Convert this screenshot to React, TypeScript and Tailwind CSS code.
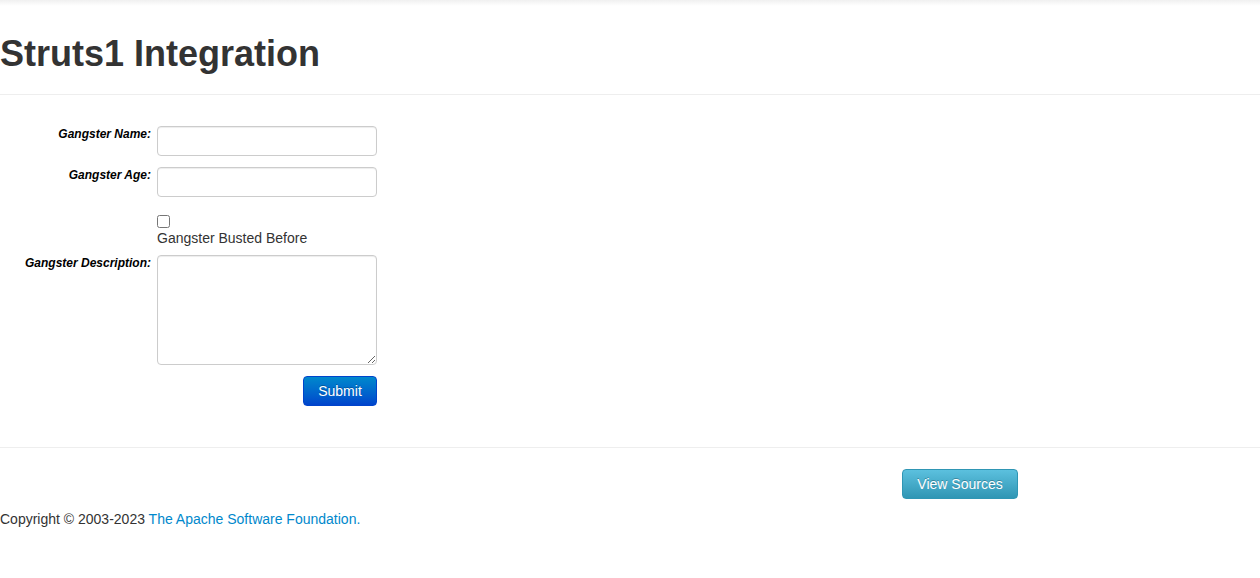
import React from "react";

export default function App() {
  const font = { fontFamily: '"Liberation Sans", Arial, sans-serif' };
  return (
    <div className="min-h-[578px] w-full bg-white text-[14px] leading-[20px] text-[#333]" style={font}>
      <div className="h-[6px] bg-gradient-to-b from-[#f0f0f0] to-white" />
      <div className="mt-[28px] border-b border-[#eee] pb-[20px]">
        <h1 className="m-0 text-[36px] font-bold leading-[40px] text-[#333]">Struts1 Integration</h1>
      </div>

      <form className="pt-[31px]" onSubmit={(e) => e.preventDefault()}>
        <div className="flex items-start">
          <label className="w-[151px] text-right text-[12px] font-bold italic leading-[16px] text-black">Gangster Name:</label>
          <input
            type="text"
            className="ml-[6px] h-[30px] w-[220px] rounded-[4px] border border-[#ccc] bg-white px-[6px] shadow-[inset_0_1px_1px_rgba(0,0,0,0.075)] outline-none"
          />
        </div>
        <div className="mt-[11px] flex items-start">
          <label className="w-[151px] text-right text-[12px] font-bold italic leading-[16px] text-black">Gangster Age:</label>
          <input
            type="text"
            className="ml-[6px] h-[30px] w-[220px] rounded-[4px] border border-[#ccc] bg-white px-[6px] shadow-[inset_0_1px_1px_rgba(0,0,0,0.075)] outline-none"
          />
        </div>
        <div className="mt-[18px] flex items-start">
          <div className="w-[151px]" />
          <div className="ml-[6px] flex flex-col items-start">
            <input type="checkbox" className="m-0 h-[13px] w-[13px]" />
            <span className="text-[14px] leading-[20px] text-[#333]">Gangster Busted Before</span>
          </div>
        </div>
        <div className="mt-[7px] flex items-start">
          <label className="w-[151px] text-right text-[12px] font-bold italic leading-[16px] text-black">Gangster Description:</label>
          <textarea className="ml-[6px] block h-[110px] w-[220px] rounded-[4px] border border-[#ccc] bg-white px-[6px] py-[4px] shadow-[inset_0_1px_1px_rgba(0,0,0,0.075)] outline-none" />
        </div>
        <div className="mt-[11px] flex w-[377px] justify-end">
          <button
            type="submit"
            className="h-[30px] w-[74px] rounded-[4px] border border-[#0044cc] bg-gradient-to-b from-[#0088cc] to-[#0044cc] text-[14px] leading-[20px] text-white [text-shadow:0_-1px_0_rgba(0,0,0,0.25)]"
          >
            Submit
          </button>
        </div>
      </form>

      <div className="mt-[41px] border-t border-[#eee]" />
      <div className="mt-[21px] flex w-[1018px] justify-end">
        <button
          type="button"
          className="h-[30px] w-[116px] rounded-[4px] border border-[#2f96b4] bg-gradient-to-b from-[#5bc0de] to-[#2f96b4] text-[14px] leading-[20px] text-white [text-shadow:0_-1px_0_rgba(0,0,0,0.25)]"
        >
          View Sources
        </button>
      </div>
      <p className="mt-[10px] text-[14px] leading-[20px] text-[#333]">
        Copyright © 2003-2023 <a className="text-[#0088cc]" href="#">The Apache Software Foundation.</a>
      </p>
    </div>
  );
}
